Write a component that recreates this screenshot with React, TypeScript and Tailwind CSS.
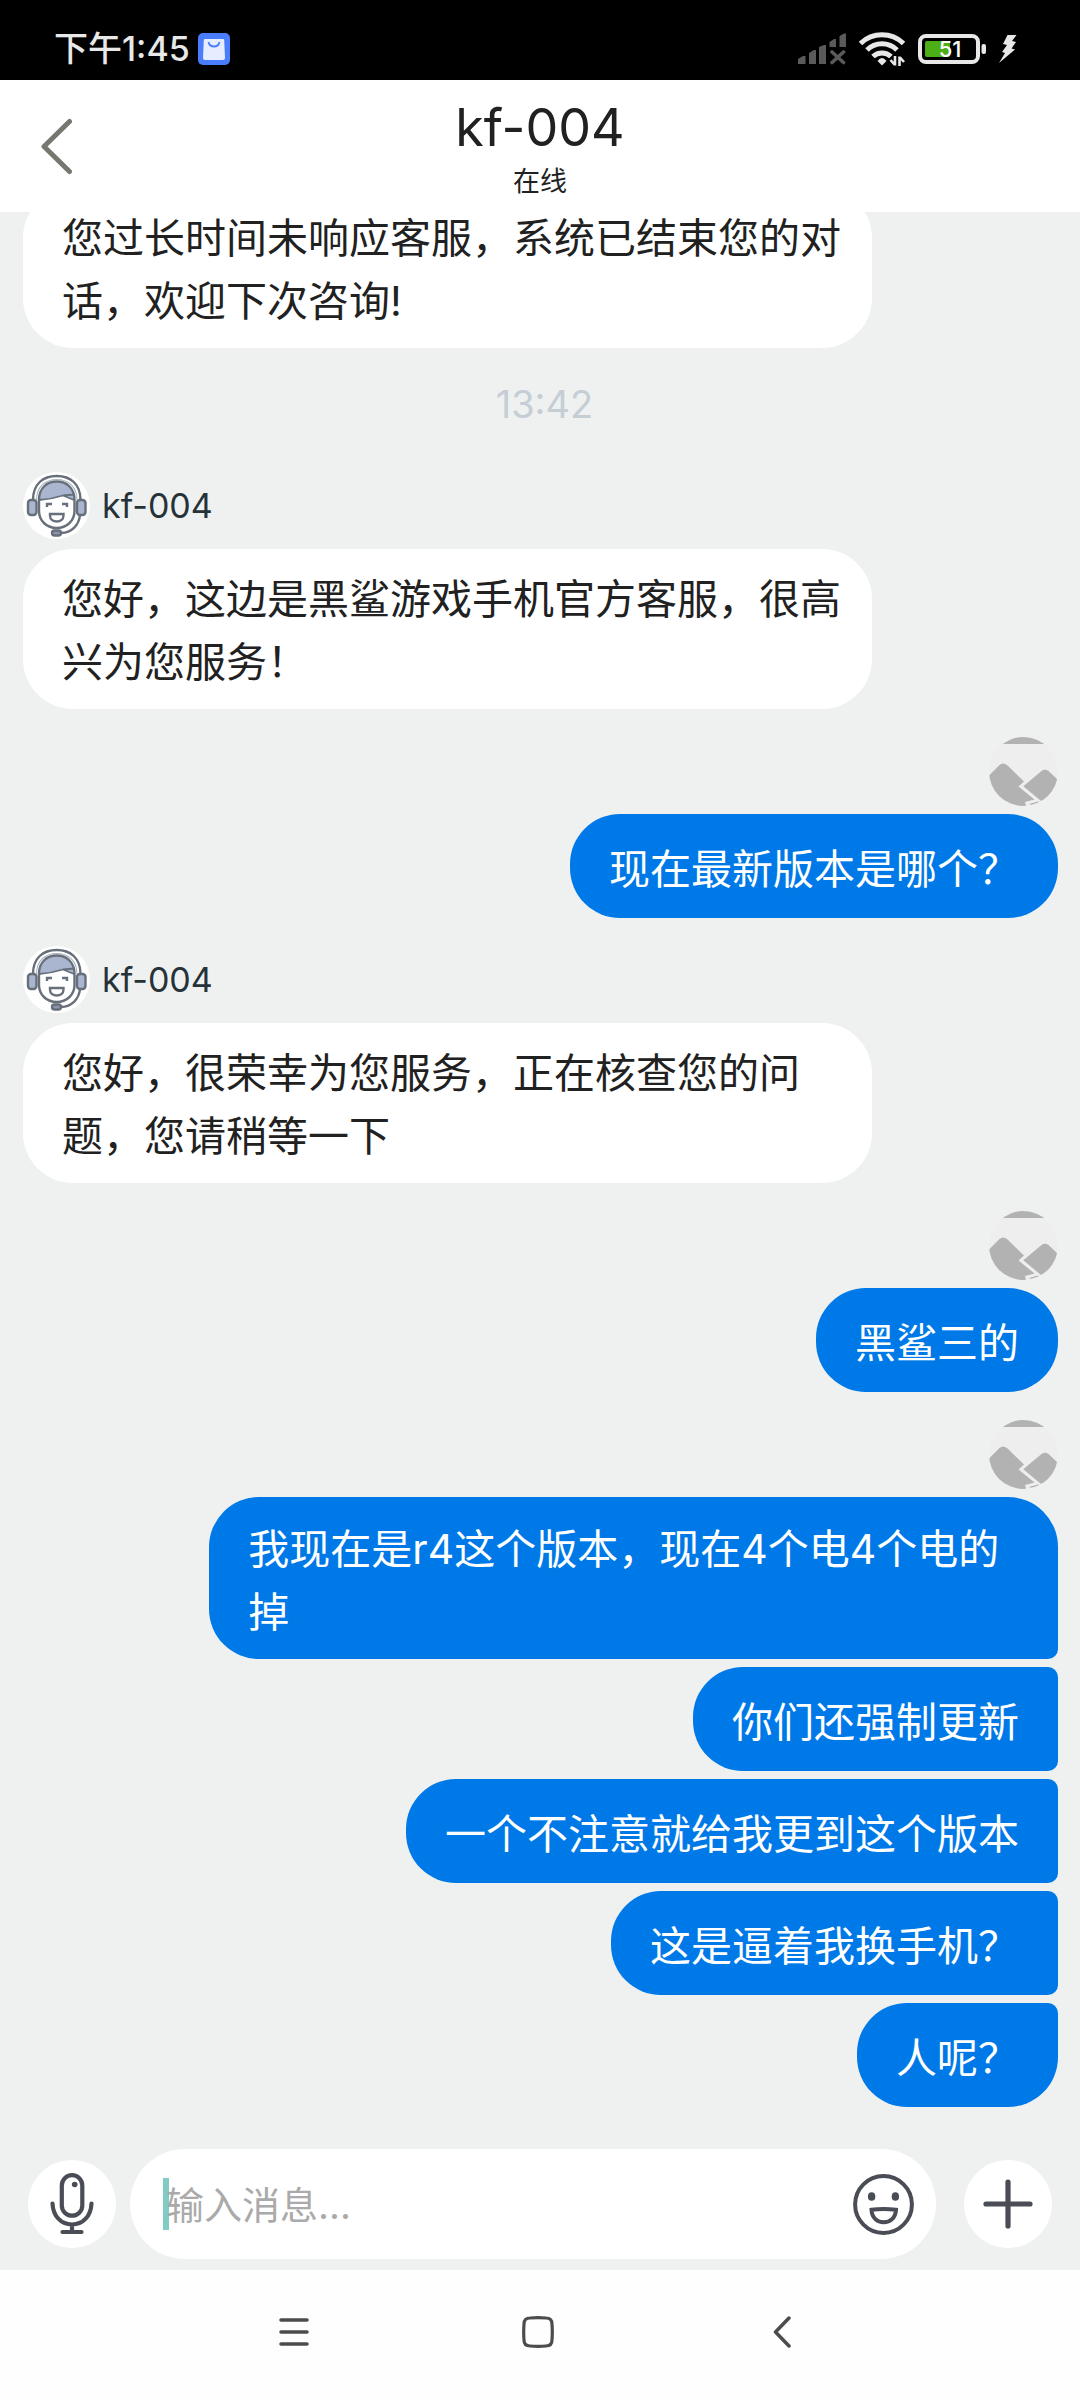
import { clsx } from 'clsx';

type MessageGroup = {
  from: 'agent' | 'me';
  messages: string[];
};

const groups: MessageGroup[] = [
  { from: 'agent', messages: ['您好，这边是黑鲨游戏手机官方客服，很高兴为您服务！'] },
  { from: 'me', messages: ['现在最新版本是哪个？'] },
  { from: 'agent', messages: ['您好，很荣幸为您服务，正在核查您的问题，您请稍等一下'] },
  { from: 'me', messages: ['黑鲨三的'] },
  {
    from: 'me',
    messages: [
      '我现在是r4这个版本，现在4个电4个电的掉',
      '你们还强制更新',
      '一个不注意就给我更到这个版本',
      '这是逼着我换手机？',
      '人呢？',
    ],
  },
];

const SignalIcon = () => (
  <svg width="48" height="32" viewBox="0 0 48 32" fill="#5a5a5a">
    <path d="M0 26l5-3h2.500v8H0zM11 20l5-3h2v14h-7zM21 14l5-2h2v19h-7zM31.500 9l4.500-3h2v8h-6.500zM41.500 3L46 .5h2V14h-6.500z" />
    <path d="M34 19l11.500 10.500M45.500 19L34 29.500" stroke="#5a5a5a" strokeWidth="3.600" strokeLinecap="round" />
  </svg>
);

const WifiIcon = () => (
  <svg width="46" height="36" viewBox="0 0 46 36" fill="none" stroke="#e8e8e8" strokeWidth="5">
    <path d="M1.500 12.500A31 31 0 0 1 44.500 12.500" />
    <path d="M8 19A21 21 0 0 1 38 19" />
    <path d="M14 25.500A13 13 0 0 1 32 25.500" />
    <path d="M18.500 30q4.500-6 9 0l-4.500 4.500z" fill="#e8e8e8" stroke="none" />
    <path d="M36 25v9.500M31.500 29l4 4.500M40.500 35v-9.500M45 31l-4-4.500" strokeWidth="2.600" />
  </svg>
);

const BatteryIcon = () => (
  <div className="relative">
    <svg width="68" height="30" viewBox="0 0 68 30">
      <rect x="2" y="2" width="58" height="26" rx="6" fill="none" stroke="#e8e8e8" strokeWidth="4" />
      <rect x="7" y="7" width="25" height="16" rx="2" fill="#4caf16" />
      <rect x="63.500" y="10" width="4.500" height="10" rx="2" fill="#e8e8e8" />
    </svg>
    <span className="absolute inset-y-0 left-0 w-16 text-center text-[22px] leading-[30px] font-medium text-white">51</span>
  </div>
);

const BoltIcon = () => (
  <svg width="18" height="28" viewBox="0 0 18 28" fill="#e8e8e8">
    <path d="M8.500 0h9L13 6l4 1-4.500 6.500 3.500 1L0 28l6-10-3-1 5-7-4-1z" />
  </svg>
);

const AppBadge = () => (
  <svg width="32" height="32" viewBox="0 0 32 32">
    <rect width="32" height="32" rx="5" fill="#4a7dfb" />
    <path d="M7 6h18q1 0 1.200 1L27 25q0 2-2 2H7q-2 0-2-2L5.800 7Q6 6 7 6z" fill="#e6edff" />
    <path d="M10.500 9q1 4.500 5.500 4.500T21.500 9" fill="none" stroke="#4a7dfb" strokeWidth="1.800" />
  </svg>
);

const AgentAvatar = () => (
  <svg width="67" height="67" viewBox="0 0 67 67" fill="none" stroke="#666f7a" strokeWidth="2.400">
    <circle cx="33.500" cy="33.500" r="33.500" fill="#fff" stroke="none" />
    <path d="M10 28C10 12 20 4 33.700 4S57.500 12 57.500 28" />
    <path d="M13.500 28C13.500 15 22 7.500 33.700 7.500S54 15 54 28" strokeWidth="1.200" stroke="#aeb5be" />
    <path d="M16 28c0-12 8-18.500 17.700-18.500S51.500 16 51.500 28l-10-4.500Q28 27 16 28z" fill="#aab6d0" stroke="none" />
    <path d="M16 28c0-12 8-18.500 17.700-18.500S51.500 16 51.500 28v11c0 10-8 17-17.800 17S16 49 16 39z" />
    <path d="M16 28q13-1 24-4.500l11.500-1M40 23.500l11 4.500" strokeWidth="1.800" />
    <rect x="5" y="28" width="8.500" height="15" rx="3" fill="#aab6d0" />
    <rect x="54" y="28" width="8.500" height="15" rx="3" fill="#aab6d0" />
    <path d="M24 35v-3h5M39 32h5v3" />
    <path d="M27 42h13.500v1.500c0 8-13.500 8-13.500 0z" />
    <path d="M57 43c-1 10-8 17.500-19 18" />
    <rect x="29" y="58.500" width="9" height="5" rx="2.500" fill="#8b95a5" />
  </svg>
);

// placeholder shown when the visitor has no portrait
const VisitorAvatar = () => (
  <svg width="69" height="69" viewBox="0 0 69 69" className="rounded-full" fill="#b2b2b2">
    <rect width="69" height="69" fill="#eee" />
    <rect width="69" height="7" />
    <path d="M0 38.500L10.500 28q3.500-3 7.500 0l17 16.500-5.500 5 16 13L36 65l1 4H0z" />
    <path d="M34.300 49.300L52.500 34q3.500-2.500 7 0l9.500 9-6 16-11 5z" />
    <path d="M40 67l9-2.500 2 .5-8 3z" />
  </svg>
);

const MicIcon = () => (
  <svg width="44" height="62" viewBox="0 0 44 62" fill="none" stroke="#4a4c56" strokeWidth="4.200" strokeLinecap="round">
    <rect x="11.800" y="2.200" width="20.500" height="40.500" rx="10.200" />
    <path d="M2.500 30.500C3 43 11 51.500 22 51.500S41 43 41.500 30.500M22 52v6M12.500 59h19" />
    <circle cx="24.700" cy="11.500" r="2.800" fill="#4a4c56" stroke="none" />
  </svg>
);

const SmileIcon = () => (
  <svg width="61" height="61" viewBox="0 0 61 61" fill="none" stroke="#4a4c56" strokeWidth="4">
    <circle cx="30.500" cy="30.500" r="28.400" />
    <ellipse cx="18.600" cy="22.500" rx="3.700" ry="4.300" fill="#4a4c56" stroke="none" />
    <ellipse cx="42.400" cy="22.500" rx="3.700" ry="4.300" fill="#4a4c56" stroke="none" />
    <path d="M18.500 35.800Q30.500 34 43 35.800C42.500 44 37 48.300 30.700 48.300S18.800 44 18.500 35.800z" />
  </svg>
);

const StatusBar = () => (
  <div className="flex h-20 shrink-0 items-center justify-between bg-black pt-[18px] pr-[63px] pl-[54px]">
    <div className="flex items-center gap-2">
      <span className="text-[34px] leading-10 font-medium text-[#e8e8e8]">下午1:45</span>
      <AppBadge />
    </div>
    <div className="flex items-center gap-[13px]">
      <SignalIcon />
      <WifiIcon />
      <BatteryIcon />
      <BoltIcon />
    </div>
  </div>
);

const ChatHeader = () => (
  <header className="z-10 grid shrink-0 grid-cols-[1fr_auto_1fr] items-center bg-white">
    <button type="button" aria-label="返回" className="justify-self-start pl-10">
      <svg width="33" height="57" viewBox="0 0 33 57" fill="none" stroke="#77776f" strokeWidth="5" strokeLinecap="round" strokeLinejoin="round">
        <path d="M29.500 3.500L4 28.500l25.500 25" />
      </svg>
    </button>
    <div className="pt-4 pb-3 text-center text-[#212121]">
      <h1 className="text-[52px] leading-[64px]">kf-004</h1>
      <p className="pt-1 text-[27px] leading-9">在线</p>
    </div>
  </header>
);

const AgentBubble = ({ text }: { text: string }) => (
  <p className="w-[82%] rounded-[50px] bg-white pt-[19px] pr-[29px] pb-[15px] pl-[39px] text-[41px] leading-[63px] text-[#212121]">
    {text}
  </p>
);

const MyBubble = ({ text, first, last }: { text: string; first: boolean; last: boolean }) => (
  <div
    className={clsx(
      'flex min-h-[104px] max-w-[82%] items-center rounded-l-[50px] bg-[#0079e8] px-[39px] pt-[21px] pb-[15px] text-[41px] leading-[63px] text-white',
      first ? 'rounded-tr-[50px]' : 'rounded-tr-[10px]',
      last ? 'rounded-br-[50px]' : 'rounded-br-[10px]',
    )}
  >
    <p>{text}</p>
  </div>
);

const Group = ({ group }: { group: MessageGroup }) => {
  if (group.from === 'agent') {
    return (
      <section className="flex flex-col gap-[10px]">
        <div className="flex items-center gap-3">
          <AgentAvatar />
          <span className="text-[34px] leading-10 text-[#263238]">kf-004</span>
        </div>
        {group.messages.map((text) => (
          <AgentBubble key={text} text={text} />
        ))}
      </section>
    );
  }

  return (
    <section className="flex flex-col items-end gap-2">
      <VisitorAvatar />
      {group.messages.map((text, index) => (
        <MyBubble key={text} text={text} first={index === 0} last={index === group.messages.length - 1} />
      ))}
    </section>
  );
};

const InputBar = () => (
  <form className="flex shrink-0 items-center px-7 pt-3 pb-[11px]">
    <button type="button" aria-label="语音" className="flex size-[88px] shrink-0 items-center justify-center rounded-full bg-white">
      <MicIcon />
    </button>
    <div className="relative mr-7 ml-[14px] flex h-[110px] min-w-0 flex-1 items-center rounded-full bg-white pr-[22px] pl-9">
      <span className="absolute left-[33px] h-[52px] w-[6px] bg-[#80cbc4]" />
      <input
        type="text"
        aria-label="输入消息"
        placeholder="输入消息..."
        className="relative min-w-0 flex-1 bg-transparent pt-[2px] text-[38px] leading-[60px] text-[#212121] outline-none placeholder:text-[#aaaaaa]"
      />
      <button type="button" aria-label="表情">
        <SmileIcon />
      </button>
    </div>
    <button type="button" aria-label="更多" className="flex size-[88px] shrink-0 items-center justify-center rounded-full bg-white">
      <svg width="50" height="50" viewBox="0 0 50 50" fill="none" stroke="#4a4c56" strokeWidth="5.200" strokeLinecap="round">
        <path d="M25 3v44M3 25h44" />
      </svg>
    </button>
  </form>
);

const SystemNav = () => (
  <nav className="flex h-[130px] shrink-0 items-center bg-[#fefefe] pr-44 pb-[6px] pl-43">
    <button type="button" aria-label="最近任务" className="flex flex-1 justify-center">
      <svg width="30" height="28" viewBox="0 0 30 28" stroke="#4c4c4c" strokeWidth="3.500" strokeLinecap="round">
        <path d="M2 2h26M2 14h26M2 26h26" />
      </svg>
    </button>
    <button type="button" aria-label="主屏幕" className="flex flex-1 justify-center">
      <svg width="32" height="32" viewBox="0 0 32 32" fill="none" stroke="#4c4c4c" strokeWidth="3.200">
        <path d="M8 2q8-.6 16 0 6 0 6 6 .6 8 0 16 0 6-6 6-8 .6-16 0-6 0-6-6-.6-8 0-16 0-6 6-6z" />
      </svg>
    </button>
    <button type="button" aria-label="后退" className="flex flex-1 justify-center">
      <svg width="18" height="32" viewBox="0 0 18 32" fill="none" stroke="#4c4c4c" strokeWidth="3.500" strokeLinecap="round" strokeLinejoin="round">
        <path d="M16 2L2.500 16 16 30" />
      </svg>
    </button>
  </nav>
);

export default function App() {
  return (
    <div lang="zh-CN" className="flex h-screen flex-col bg-[#eff1f1] font-[Inter,'Noto_Sans_CJK_SC',sans-serif]">
      <StatusBar />
      <ChatHeader />
      <main className="flex min-h-0 flex-1 flex-col justify-end overflow-hidden">
        <div className="flex flex-col gap-7 pr-[22px] pb-[30px] pl-[23px]">
          <AgentBubble text="您过长时间未响应客服，系统已结束您的对话，欢迎下次咨询!" />
          <time className="pb-3 pl-2 text-center text-[38px] leading-[56px] text-[#c4ced4]">13:42</time>
          {groups.map((group) => (
            <Group key={group.messages[0]} group={group} />
          ))}
        </div>
      </main>
      <InputBar />
      <SystemNav />
    </div>
  );
}
